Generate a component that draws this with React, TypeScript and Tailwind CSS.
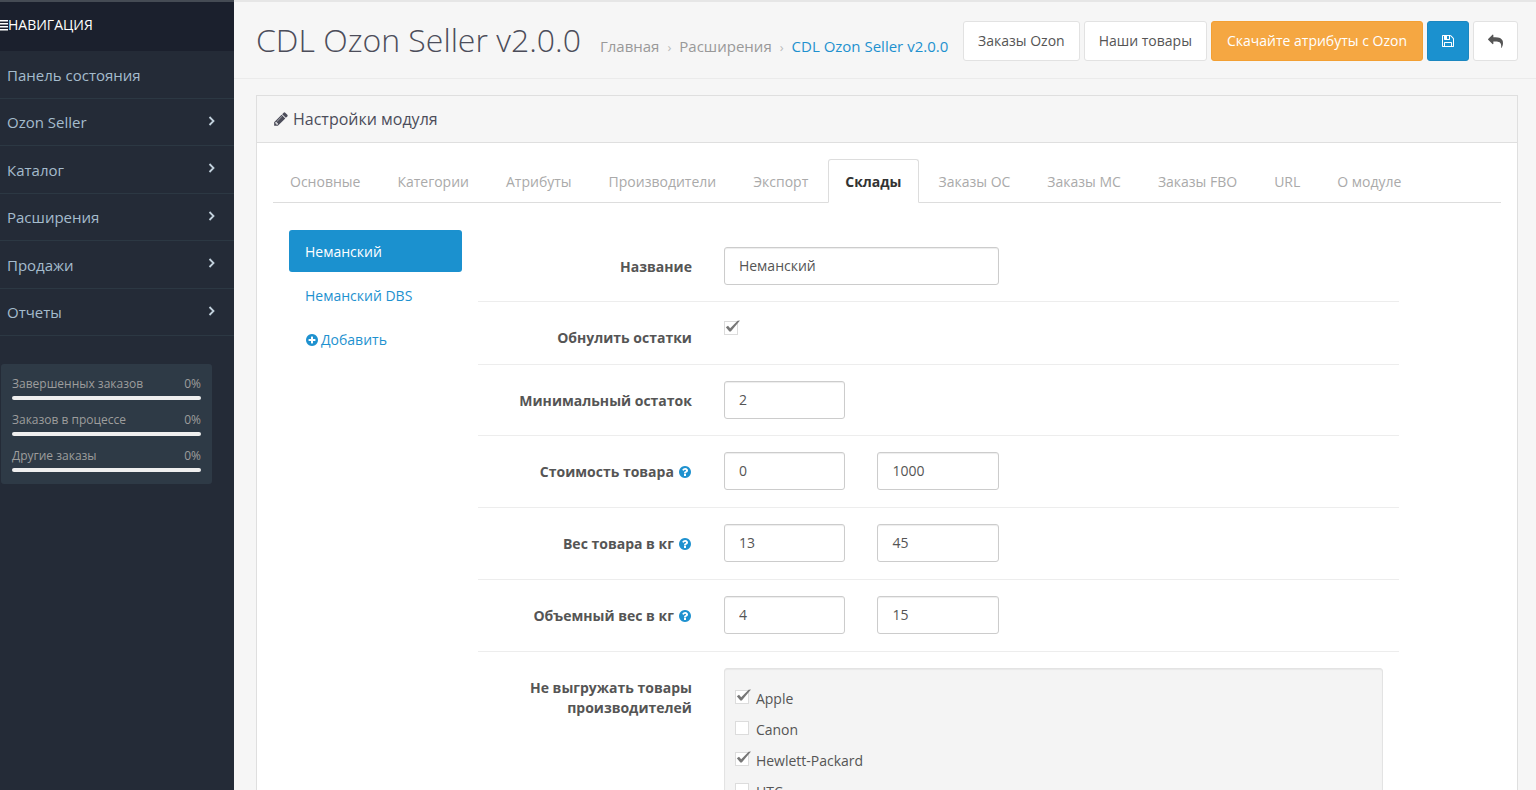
import { useState, type ReactNode } from "react";
import clsx from "clsx";

const CIRCLE =
  "M1664 896q0 209-103 385.5t-279.5 279.5-385.5 103-385.5-103-279.5-279.5-103-385.5 103-385.5 279.5-279.5 385.5-103 385.5 103 279.5 279.5 103 385.5z";

const ICONS = {
  save: "M512 1536h768v-384h-768v384zm896 0h128v-896q0-14-10-38.5t-20-34.5l-281-281q-10-10-34-20t-39-10v416q0 40-28 68t-68 28h-576q-40 0-68-28t-28-68v-416h-128v1280h128v-416q0-40 28-68t68-28h832q40 0 68 28t28 68v416zm-384-928v-320q0-13-9.5-22.5t-22.5-9.5h-192q-13 0-22.5 9.5t-9.5 22.5v320q0 13 9.5 22.5t22.5 9.5h192q13 0 22.5-9.5t9.5-22.5zm640 32v928q0 40-28 68t-68 28h-1344q-40 0-68-28t-28-68v-1344q0-40 28-68t68-28h928q40 0 88 20t76 48l280 280q28 28 48 76t20 88z",
  reply:
    "M1792 1120q0 166-127 451-3 7-10.5 24t-13.5 30-13 22q-12 17-28 17-15 0-23.5-10t-8.5-25q0-9 2.5-26.5t2.5-23.5q5-68 5-123 0-101-17.5-181t-48.5-138.5-80-101-105.5-69.5-133-42.5-154-21.5-175.5-6h-224v256q0 26-19 45t-45 19-45-19l-512-512q-19-19-19-45t19-45l512-512q19-19 45-19t45 19 19 45v256h224q713 0 875 403 53 134 53 333z",
  pencil:
    "M491 1536l91-91-235-235-91 91v107h128v128h107zm523-928q0-22-22-22-10 0-17 7l-542 542q-7 7-7 17 0 22 22 22 10 0 17-7l542-542q7-7 7-17zm-54-192l416 416-832 832h-416v-416zm683 96q0 53-37 90l-166 166-416-416 166-165q36-38 90-38 53 0 91 38l235 234q37 39 37 91z",
  plus: `M1344 960v-128q0-26-19-45t-45-19h-256v-256q0-26-19-45t-45-19h-128q-26 0-45 19t-19 45v256h-256q-26 0-45 19t-19 45v128q0 26 19 45t45 19h256v256q0 26 19 45t45 19h128q26 0 45-19t19-45v-256h256q26 0 45-19t19-45z${CIRCLE}`,
  question: `M1024 1376v-192q0-14-9-23t-23-9h-192q-14 0-23 9t-9 23v192q0 14 9 23t23 9h192q14 0 23-9t9-23zm256-672q0-88-55.5-163t-138.5-116-170-41q-243 0-371 213-15 24 8 42l132 100q7 6 19 6 16 0 25-12 53-68 86-92 34-24 86-24 48 0 85.5 26t37.5 59q0 38-20 61t-68 45q-63 28-115.5 86.5t-52.5 125.5v36q0 14 9 23t23 9h192q14 0 23-9t9-23q0-19 21.5-49.5t54.5-49.5q32-18 49-28.5t46-35 44.5-48 28-60.5 12.5-81z${CIRCLE}`,
};

function Icon({ name, className }: { name: keyof typeof ICONS; className?: string }) {
  return (
    <svg viewBox="0 0 1792 1792" fill="currentColor" fillRule="evenodd" className={className} aria-hidden="true">
      <path d={ICONS[name]} />
    </svg>
  );
}

const menu = [
  { label: "Панель состояния", nested: false },
  { label: "Ozon Seller", nested: true },
  { label: "Каталог", nested: true },
  { label: "Расширения", nested: true },
  { label: "Продажи", nested: true },
  { label: "Отчеты", nested: true },
];

const stats = ["Завершенных заказов", "Заказов в процессе", "Другие заказы"];

const tabs = [
  "Основные",
  "Категории",
  "Атрибуты",
  "Производители",
  "Экспорт",
  "Склады",
  "Заказы ОС",
  "Заказы МС",
  "Заказы FBO",
  "URL",
  "О модуле",
];

const ranges = [
  { id: "price", label: "Стоимость товара", from: "0", to: "1000" },
  { id: "weight", label: "Вес товара в кг", from: "13", to: "45" },
  { id: "volume", label: "Объемный вес в кг", from: "4", to: "15" },
];

const manufacturers = [
  { name: "Apple", checked: true },
  { name: "Canon", checked: false },
  { name: "Hewlett-Packard", checked: true },
  { name: "HTC", checked: false },
];

function Sidebar() {
  return (
    <aside className="w-[234px] shrink-0 bg-[#242b37]">
      <div className="flex h-[51px] items-center border-t-2 border-[#454b54] bg-[#1b202d] pb-[3px] text-sm text-white">
        <svg viewBox="0 0 8 12" className="h-3 w-2" fill="currentColor" aria-hidden="true">
          <path d="M0 1h8v1.6H0zM0 4h8v1.6H0zM0 7h8v1.6H0zM0 10h8v1.6H0z" />
        </svg>
        НАВИГАЦИЯ
      </div>
      <nav>
        <ul className="flex h-[285px] flex-col text-[15px] text-[#a5bccd]">
          {menu.map((item) => (
            <li key={item.label} className="flex-1 border-b border-[#2c3843]">
              <a href="#" className="flex h-full items-center justify-between pt-px pr-[18px] pl-[7px]">
                {item.label}
                {item.nested && (
                  <svg viewBox="0 0 8 12" className="mb-[3px] h-3 w-2" fill="none" stroke="#c3d2dd" strokeWidth="1.8" aria-hidden="true">
                    <path d="M1.5 2l4 4-4 4" />
                  </svg>
                )}
              </a>
            </li>
          ))}
        </ul>
      </nav>
      <ul className="mt-7 mr-[22px] ml-px flex flex-col gap-[11px] rounded-[3px] bg-[#2e3a46] px-[11px] pt-[11px] pb-3 text-xs text-[#9d9d9d]">
        {stats.map((label) => (
          <li key={label}>
            <div className="flex justify-between leading-[18px]">
              <span>{label}</span>
              <span>0%</span>
            </div>
            <div className="mt-[3px] h-1 rounded-sm bg-[#efefef]" />
          </li>
        ))}
      </ul>
    </aside>
  );
}

function PageHeader() {
  const button = "flex h-10 items-center rounded-[3px] border text-sm";
  return (
    <header className="flex justify-between border-t-2 border-b border-t-[#e6e6e6] border-b-[#ebebeb] pr-[18px] pb-[14px] pl-[22px] whitespace-nowrap">
      <div className="flex items-baseline gap-[19px] pt-[14px]">
        <h1 className="text-[32px] leading-[48px] font-light text-[#4c4d5a]">CDL Ozon Seller v2.0.0</h1>
        <nav className="flex items-baseline gap-2 text-[15px] text-[#999]">
          <a href="#">Главная</a>
          <span className="text-[13px] text-[#bbb]">›</span>
          <a href="#">Расширения</a>
          <span className="text-[13px] text-[#bbb]">›</span>
          <a href="#" className="text-[#1e91cf]">CDL Ozon Seller v2.0.0</a>
        </nav>
      </div>
      <div className="flex gap-1 pt-[19px]">
        <button className={clsx(button, "border-[#e2e2e2] bg-white px-[14px] text-[#555]")}>Заказы Ozon</button>
        <button className={clsx(button, "border-[#e2e2e2] bg-white px-[14px] text-[#555]")}>Наши товары</button>
        <button className={clsx(button, "border-[#f3a033] bg-[#f5a742] px-[15px] text-white")}>Скачайте атрибуты с Ozon</button>
        <button aria-label="Сохранить" className={clsx(button, "border-[#1b87c0] bg-[#1b91cf] px-[13px] text-white")}>
          <Icon name="save" className="size-[14px]" />
        </button>
        <button aria-label="Отменить" className={clsx(button, "border-[#e2e2e2] bg-white px-[14px] text-[#555]")}>
          <Icon name="reply" className="size-[15px]" />
        </button>
      </div>
    </header>
  );
}

function Checkbox({ id, checked }: { id: string; checked: boolean }) {
  const [on, setOn] = useState(checked);
  return (
    <span className="relative block size-[14px]">
      <input
        id={id}
        type="checkbox"
        checked={on}
        onChange={() => setOn(!on)}
        className="block size-[14px] appearance-none border border-[#dcdcdc] bg-white"
      />
      {on && (
        <svg viewBox="0 0 16 14" className="pointer-events-none absolute -top-px left-px h-[14px] w-4" aria-hidden="true">
          <path d="M0.8 7.2L3 5.8 5.2 8.2 12.6 0.8 15 0.6 5.8 11.6H4.4z" fill="#777" />
        </svg>
      )}
    </span>
  );
}

function TextField({ id, value, label }: { id: string; value: string; label?: string }) {
  return (
    <input
      id={id}
      type="text"
      aria-label={label}
      defaultValue={value}
      className="block h-[38px] w-full rounded-[3px] border border-[#ccc] bg-white px-[14px] pb-[2px] text-sm text-[#555] shadow-[inset_0_1px_1px_rgba(0,0,0,0.075)]"
    />
  );
}

function FieldRow({ id, label, help, children }: { id: string; label: string; help?: boolean; children: ReactNode }) {
  return (
    <div className={clsx("grid grid-cols-12 border-t border-[#ededed] pt-4 first:border-t-0 first:pt-[17px]", help ? "pb-[17px]" : "pb-4")}>
      <label htmlFor={id} className="col-span-3 px-4 pt-[10px] text-right text-sm leading-5 font-bold text-[#555]">
        {label}
        {help && <Icon name="question" className="ml-1 inline size-[14px] align-[-2px] text-[#1e91cf]" />}
      </label>
      {children}
    </div>
  );
}

function WarehouseForm() {
  return (
    <form className="col-span-9">
      <FieldRow id="name" label="Название">
        <div className="col-span-4 px-4">
          <TextField id="name" value="Неманский" />
        </div>
      </FieldRow>
      <FieldRow id="reset" label="Обнулить остатки">
        <div className="col-span-4 px-4 pt-[3px]">
          <Checkbox id="reset" checked />
        </div>
      </FieldRow>
      <FieldRow id="minimum" label="Минимальный остаток">
        <div className="col-span-2 px-4">
          <TextField id="minimum" value="2" />
        </div>
      </FieldRow>
      {ranges.map((r) => (
        <FieldRow key={r.id} id={r.id} label={r.label} help>
          <div className="col-span-2 px-4">
            <TextField id={r.id} value={r.from} />
          </div>
          <div className="col-span-2 px-4">
            <TextField id={`${r.id}-to`} label={`${r.label}, до`} value={r.to} />
          </div>
        </FieldRow>
      ))}
      <FieldRow id="maker-Apple" label="Не выгружать товары производителей">
        <div className="col-span-9 px-4">
          <ul className="rounded-[3px] border border-[#e3e3e3] bg-[#f4f4f4] px-[10px] pt-[14px] pb-4 shadow-[inset_0_1px_1px_rgba(0,0,0,0.05)]">
            {manufacturers.map((m) => (
              <li key={m.name} className="flex h-[31px] items-center gap-[7px] text-sm text-[#555]">
                <span className="pb-1">
                  <Checkbox id={`maker-${m.name}`} checked={m.checked} />
                </span>
                <label htmlFor={`maker-${m.name}`}>{m.name}</label>
              </li>
            ))}
          </ul>
        </div>
      </FieldRow>
    </form>
  );
}

export default function App() {
  const [tab, setTab] = useState("Склады");

  return (
    <div className="flex h-screen overflow-hidden bg-[#f6f6f6] font-['Open_Sans','Noto_Sans',sans-serif]">
      <Sidebar />
      <main className="min-w-0 flex-1">
        <PageHeader />
        <section className="mt-4 mr-[18px] ml-[22px] border border-[#dfdfdf] bg-white">
          <h2 className="flex h-[47px] items-center gap-1 border-b border-[#dfdfdf] bg-[#f6f6f6] px-4 text-base font-medium text-[#4c4d5a]">
            <Icon name="pencil" className="size-4" />
            Настройки модуля
          </h2>
          <div className="p-4">
            <div role="tablist" className="flex gap-[3px] border-b border-[#ddd] text-sm whitespace-nowrap">
              {tabs.map((t) => (
                <button
                  key={t}
                  role="tab"
                  aria-selected={t === tab}
                  onClick={() => setTab(t)}
                  className={clsx(
                    "-mb-px h-11 rounded-t-[3px] border px-4 pt-[2px]",
                    t === tab ? "border-[#ddd] border-b-white bg-white font-bold text-[#333]" : "border-transparent text-[#aaa]"
                  )}
                >
                  {t}
                </button>
              ))}
            </div>
            <div className="mt-[27px] grid grid-cols-12">
              <ul className="col-span-2 flex flex-col gap-[2px] px-4 text-sm text-[#1e91cf]">
                <li>
                  <a href="#" className="flex h-[42px] items-center rounded-[3px] bg-[#1b91cf] px-4 pt-px text-white">
                    Неманский
                  </a>
                </li>
                <li>
                  <a href="#" className="flex h-[42px] items-center px-4 pt-px">
                    Неманский DBS
                  </a>
                </li>
                <li>
                  <a href="#" className="flex h-[42px] items-center gap-[2px] px-4 pt-px">
                    <Icon name="plus" className="size-[14px]" />
                    Добавить
                  </a>
                </li>
              </ul>
              <WarehouseForm />
            </div>
          </div>
        </section>
      </main>
    </div>
  );
}
